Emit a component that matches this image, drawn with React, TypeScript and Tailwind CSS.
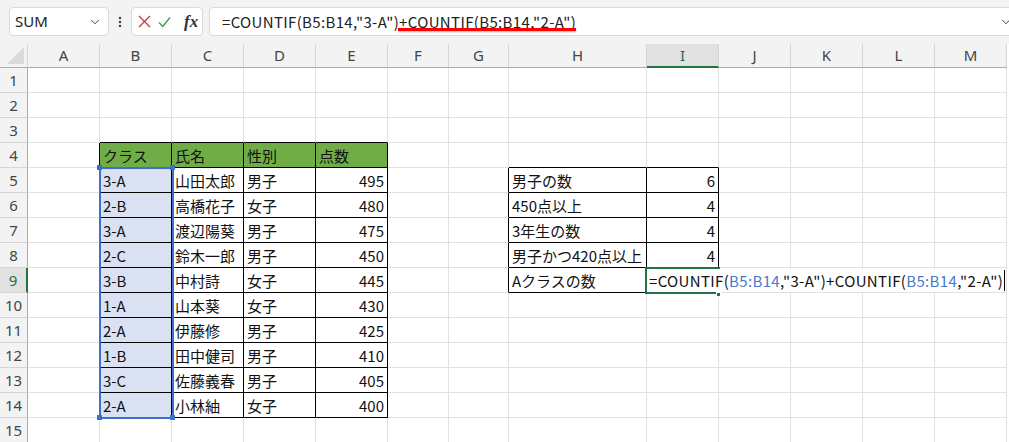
import { Fragment } from 'react';
import { ChevronDown, EllipsisVertical } from 'lucide-react';

const LETTERS = ['A', 'B', 'C', 'D', 'E', 'F', 'G', 'H', 'I', 'J', 'K', 'L', 'M'];

const students = [
  ['3-A', '山田太郎', '男子', '495'],
  ['2-B', '高橋花子', '女子', '480'],
  ['3-A', '渡辺陽葵', '男子', '475'],
  ['2-C', '鈴木一郎', '男子', '450'],
  ['3-B', '中村詩', '女子', '445'],
  ['1-A', '山本葵', '女子', '430'],
  ['2-A', '伊藤修', '男子', '425'],
  ['1-B', '田中健司', '男子', '410'],
  ['3-C', '佐藤義春', '男子', '405'],
  ['2-A', '小林紬', '女子', '400'],
];

const summary = [
  ['男子の数', '6'],
  ['450点以上', '4'],
  ['3年生の数', '4'],
  ['男子かつ420点以上', '4'],
];

type Cell = { t: string; right?: boolean };

const cells: Record<string, Cell> = {
  B4: { t: 'クラス' },
  C4: { t: '氏名' },
  D4: { t: '性別' },
  E4: { t: '点数' },
  H9: { t: 'Aクラスの数' },
};
students.forEach((s, i) => {
  const r = 5 + i;
  cells['B' + r] = { t: s[0] };
  cells['C' + r] = { t: s[1] };
  cells['D' + r] = { t: s[2] };
  cells['E' + r] = { t: s[3], right: true };
});
summary.forEach((s, i) => {
  const r = 5 + i;
  cells['H' + r] = { t: s[0] };
  cells['I' + r] = { t: s[1], right: true };
});

function inTable(r: number, c: number) {
  if (r >= 4 && r <= 14 && c >= 1 && c <= 4) return true;
  if (r >= 5 && r <= 8 && (c === 7 || c === 8)) return true;
  if (r === 9 && c === 7) return true;
  return false;
}

function cellBg(r: number, c: number) {
  if (r === 4 && c >= 1 && c <= 4) return 'bg-[#70ad47]';
  if (r >= 5 && r <= 14 && c === 1) return 'bg-[#d9e1f3]';
  return '';
}

function FormulaBar() {
  return (
    <div className="flex h-[44px] items-start bg-[#f3f3f3] pl-[9px] pt-[7px]">
      <div className="flex h-[29px] w-[100px] shrink-0 items-center justify-between rounded-[4px] border border-[#dadada] bg-white pl-[5px] pr-[6px]">
        <span className="font-['Noto_Sans',sans-serif] text-[15px] text-[#222]">SUM</span>
        <ChevronDown size={14} strokeWidth={1.6} className="text-[#333]" />
      </div>
      <div className="flex h-[29px] w-[22px] shrink-0 items-center justify-center">
        <EllipsisVertical size={14} strokeWidth={2.4} className="text-[#444]" />
      </div>
      <div className="flex h-[29px] w-[72px] shrink-0 items-center gap-[7px] rounded-[4px] border border-[#dadada] bg-white pl-[6px]">
        <svg width="13" height="13" viewBox="0 0 13 13">
          <path d="M1 1 L12 12 M12 1 L1 12" stroke="#d13438" strokeWidth="1.3" fill="none" />
        </svg>
        <svg width="13" height="12" viewBox="0 0 13 12">
          <path d="M1 6.5 L4.8 10.5 L12 1.5" stroke="#3a9a4a" strokeWidth="1.3" fill="none" />
        </svg>
        <span className="ml-[6px] font-['Liberation_Serif',serif] text-[17px] font-bold italic leading-none text-[#333]">
          fx
        </span>
      </div>
      <div className="ml-[6px] flex h-[29px] w-[820px] shrink-0 items-center rounded-l-[4px] border border-[#dadada] bg-white pl-[12px]">
        <div className="flex-1 whitespace-nowrap font-['Noto_Sans_CJK_JP',sans-serif] text-[15px] leading-[20px] tracking-[0.35px] text-[#222]">
          <span>{'=COUNTIF(B5:B14,"3-A")'}</span>
          <span className="relative">
            {'+COUNTIF(B5:B14,"2-A")'}
            <span className="absolute left-[-1px] right-0 top-[17px] h-[3px] bg-[#ff0000] shadow-[0_1px_2px_rgba(0,0,0,0.3)]" />
          </span>
        </div>
        <ChevronDown size={14} strokeWidth={1.6} className="mr-[15px] text-[#333]" />
      </div>
    </div>
  );
}

function Sheet() {
  const rows = Array.from({ length: 15 }, (_, i) => i + 1);
  return (
    <div className="relative grid grid-cols-[28px_72px_72px_72px_72px_72px_61px_60px_138px_72px_72px_72px_72px_72px] grid-rows-[24px_repeat(15,25px)] bg-white">
      {/* header row */}
      <div className="flex items-end justify-end border-b border-r border-b-[#ababab] border-r-[#d5d5d5] bg-[#f3f3f3] pb-[3px] pr-[3px]">
        <svg width="17" height="17" viewBox="0 0 17 17">
          <polygon points="17,0 17,17 0,17" fill="#dadada" />
        </svg>
      </div>
      {LETTERS.map((l) => (
        <div
          key={l}
          className={`flex items-center justify-center font-['Noto_Sans',sans-serif] text-[15px] ${
            l === 'I'
              ? 'border-b-2 border-r border-b-[#217346] border-r-[#d5d5d5] bg-[#e1e1e1] text-[#1f6e43]'
              : 'border-b border-r border-b-[#ababab] border-r-[#d5d5d5] bg-[#f3f3f3] text-[#444]'
          }`}
        >
          {l}
        </div>
      ))}

      {rows.map((r) => (
        <Fragment key={r}>
          <div
            className={`flex items-center justify-center font-['Noto_Sans',sans-serif] text-[15px] ${
              r === 9
                ? 'border-b border-r-2 border-b-[#d5d5d5] border-r-[#217346] bg-[#e1e1e1] text-[#1f6e43]'
                : 'border-b border-r border-b-[#d5d5d5] border-r-[#ababab] bg-[#f3f3f3] text-[#444]'
            }`}
          >
            {r}
          </div>
          {LETTERS.map((l, c) => {
            const cell = cells[l + r];
            const rb = inTable(r, c) || inTable(r, c + 1) ? 'border-r-black' : 'border-r-[#e1e1e1]';
            const bb = inTable(r, c) || inTable(r + 1, c) ? 'border-b-black' : 'border-b-[#e1e1e1]';
            return (
              <div
                key={l}
                className={`flex items-center overflow-hidden whitespace-nowrap border-b border-r px-[3px] pt-[1px] font-['Noto_Sans_CJK_JP',sans-serif] text-[15px] leading-none text-[#111] ${rb} ${bb} ${cellBg(
                  r,
                  c,
                )} ${cell?.right ? 'justify-end' : 'justify-start'}`}
              >
                {cell?.t}
              </div>
            );
          })}
        </Fragment>
      ))}

      {/* referenced range B5:B14 */}
      <div className="pointer-events-none absolute left-[99px] top-[123px] h-[252px] w-[75px] border-2 border-[#3b6fd0]" />
      <div className="absolute left-[97px] top-[121px] h-[5px] w-[5px] bg-[#3b6fd0]" />
      <div className="absolute left-[170px] top-[121px] h-[5px] w-[5px] bg-[#3b6fd0]" />
      <div className="absolute left-[97px] top-[371px] h-[5px] w-[5px] bg-[#3b6fd0]" />
      <div className="absolute left-[170px] top-[371px] h-[5px] w-[5px] bg-[#3b6fd0]" />

      {/* active cell I9 */}
      <div className="absolute left-[645px] top-[223px] h-[27px] w-[75px] border-2 border-[#217346]" />
      <div className="absolute left-[716px] top-[248px] h-[5px] w-[5px] border border-white bg-[#217346]" />

      {/* in-cell editor */}
      <div className="absolute left-[647px] top-[225px] flex h-[23px] items-center bg-white pl-[2px] pr-[1px] font-['Noto_Sans_CJK_JP',sans-serif] text-[15px] leading-none tracking-[0.35px] text-[#111]">
        <span>{'=COUNTIF('}</span>
        <span className="text-[#4a78c8]">B5:B14</span>
        <span>{',"3-A")+COUNTIF('}</span>
        <span className="text-[#4a78c8]">B5:B14</span>
        <span>{',"2-A")'}</span>
        <span className="ml-[1px] h-[21px] w-[1px] bg-black" />
      </div>
    </div>
  );
}

export default function App() {
  return (
    <div className="h-[442px] w-[1009px] overflow-hidden bg-white">
      <FormulaBar />
      <Sheet />
    </div>
  );
}
